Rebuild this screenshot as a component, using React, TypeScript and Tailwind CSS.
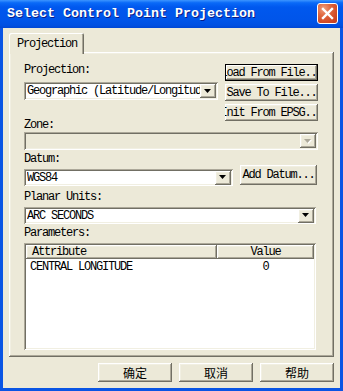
import React from "react";

const raised =
  "shadow-[inset_-1px_-1px_#716F64,inset_1px_1px_#FFFFFF,inset_-2px_-2px_#ACA899,inset_2px_2px_#F1EFE2]";
const sunken =
  "shadow-[inset_1px_1px_#ACA899,inset_-1px_-1px_#FFFFFF,inset_2px_2px_#716F64,inset_-2px_-2px_#F1EFE2]";

function Arrow({ disabled = false }: { disabled?: boolean }) {
  return (
    <div className={`w-[16px] h-[14px] bg-[#ECE9D8] flex items-center justify-center shrink-0 ${raised}`}>
      <svg width="8" height="5" viewBox="0 0 8 5">
        {disabled ? (
          <>
            <polygon points="1,1 8,1 4.5,5" fill="#FFFFFF" />
            <polygon points="0,0 7,0 3.5,4" fill="#ACA899" />
          </>
        ) : (
          <polygon points="0,0 7,0 3.5,4" fill="#000000" />
        )}
      </svg>
    </div>
  );
}

function Field({
  text,
  w,
  h = 17,
  disabled = false,
}: {
  text: string;
  w: string;
  h?: number;
  disabled?: boolean;
}) {
  return (
    <div
      className={`${w} ${h === 18 ? "h-[18px]" : "h-[17px]"} ${
        disabled ? "bg-[#ECE9D8]" : "bg-white"
      } ${sunken} flex items-center pl-[3px] pr-[2px] shrink-0`}
    >
      <span className="flex-1 overflow-hidden whitespace-nowrap">{text}</span>
      <Arrow disabled={disabled} />
    </div>
  );
}

function Btn({
  text,
  w,
  h,
  def = false,
}: {
  text: string;
  w: string;
  h: string;
  def?: boolean;
}) {
  return (
    <div
      className={`${w} ${h} bg-[#ECE9D8] flex items-center justify-center overflow-hidden whitespace-nowrap shrink-0 ${
        def
          ? "outline outline-1 outline-black -outline-offset-1 shadow-[inset_-2px_-2px_#716F64,inset_2px_2px_#FFFFFF,inset_-3px_-3px_#ACA899]"
          : raised
      }`}
    >
      <span className="shrink-0">{text}</span>
    </div>
  );
}

function CnBtn({ text }: { text: string }) {
  return (
    <div
      className={`w-[74px] h-[19px] bg-[#ECE9D8] flex items-center justify-center ${raised} font-[family-name:Noto_Sans_CJK_SC,sans-serif] text-[12px] tracking-normal`}
    >
      {text}
    </div>
  );
}

export default function App() {
  return (
    <div className="w-[343px] h-[391px] flex flex-col bg-[#0A55E4] font-[family-name:Liberation_Mono,monospace] text-[12px] leading-[12px] tracking-[-1.2px] text-black select-none">
      {/* Title bar */}
      <div className="h-[28px] flex items-start pl-[7px] pr-[5px] bg-[linear-gradient(to_bottom,#3D95FF_0%,#0A6AF8_10%,#0058EE_25%,#0055EA_70%,#0050E2_90%,#0046D4_100%)]">
        <div className="flex-1 h-[28px] flex items-center text-white font-bold text-[13.33px] tracking-normal [text-shadow:1px_1px_#0A1E8A]">
          Select Control Point Projection
        </div>
        <div className="mt-[3px] w-[21px] h-[21px] rounded-[3px] border border-white bg-[radial-gradient(circle_at_30%_25%,#F0A080_0%,#E06840_35%,#D24A26_70%,#C03A1C_100%)] flex items-center justify-center">
          <svg width="13" height="13" viewBox="0 0 13 13">
            <path d="M2 2 L11 11 M11 2 L2 11" stroke="#FFFFFF" strokeWidth="2.4" strokeLinecap="square" />
          </svg>
        </div>
      </div>

      {/* Body */}
      <div className="flex-1 mx-[3px] mb-[3px] bg-[#ECE9D8] flex flex-col pl-[6px] pr-[6px] pt-[5px]">
        {/* Tab */}
        <div className="relative z-10 w-[75px] h-[21px] -mb-[2px] bg-[#ECE9D8] rounded-t-[2px] shadow-[inset_1px_1px_#FFFFFF,inset_-1px_0_#716F64,inset_-2px_0_#ACA899] flex items-start pt-[5px] pl-[8px]">
          Projection
        </div>

        {/* Panel */}
        <div className={`h-[305px] ${raised} flex flex-col pl-[15px] pt-[12px]`}>
          {/* Top row */}
          <div className="flex items-start">
            <div className="w-[194px] flex flex-col">
              <div className="h-[12px]">Projection:</div>
              <div className="mt-[6px]">
                <Field text="Geographic (Latitude/Longitude)" w="w-[194px]" h={18} />
              </div>
              <div className="mt-[19px] h-[12px]">Zone:</div>
            </div>
            <div className="ml-[7px] flex flex-col gap-[3px]">
              <Btn text="Load From File..." w="w-[93px]" h="h-[17px]" def />
              <Btn text="Save To File..." w="w-[93px]" h="h-[17px]" />
              <Btn text="Init From EPSG..." w="w-[93px]" h="h-[17px]" />
            </div>
          </div>

          <div className="mt-[1px]">
            <Field text="" w="w-[294px]" h={18} disabled />
          </div>

          <div className="mt-[3px] h-[12px]">Datum:</div>
          <div className="flex items-start">
            <div className="mt-[4px]">
              <Field text="WGS84" w="w-[209px]" />
            </div>
            <div className="ml-[7px]">
              <Btn text="Add Datum..." w="w-[77px]" h="h-[20px]" />
            </div>
          </div>

          <div className="mt-[5px] h-[12px]">Planar Units:</div>
          <div className="mt-[4px]">
            <Field text="ARC SECONDS" w="w-[292px]" />
          </div>

          <div className="mt-[3px] h-[12px]">Parameters:</div>
          <div className={`mt-[4px] w-[292px] h-[107px] bg-white ${sunken} p-[2px] flex flex-col`}>
            <div className="h-[14px] flex">
              <div className={`w-[191px] h-[14px] bg-[#ECE9D8] ${raised} flex items-center pl-[6px]`}>
                Attribute
              </div>
              <div className={`flex-1 h-[14px] bg-[#ECE9D8] ${raised} flex items-center justify-center`}>
                Value
              </div>
            </div>
            <div className="h-[16px] flex items-center">
              <div className="w-[191px] pl-[4px]">CENTRAL LONGITUDE</div>
              <div className="flex-1 text-center">0</div>
            </div>
          </div>
        </div>

        {/* Bottom buttons */}
        <div className="mt-[6px] flex justify-end gap-[7px]">
          <CnBtn text="确定" />
          <CnBtn text="取消" />
          <CnBtn text="帮助" />
        </div>
      </div>
    </div>
  );
}
